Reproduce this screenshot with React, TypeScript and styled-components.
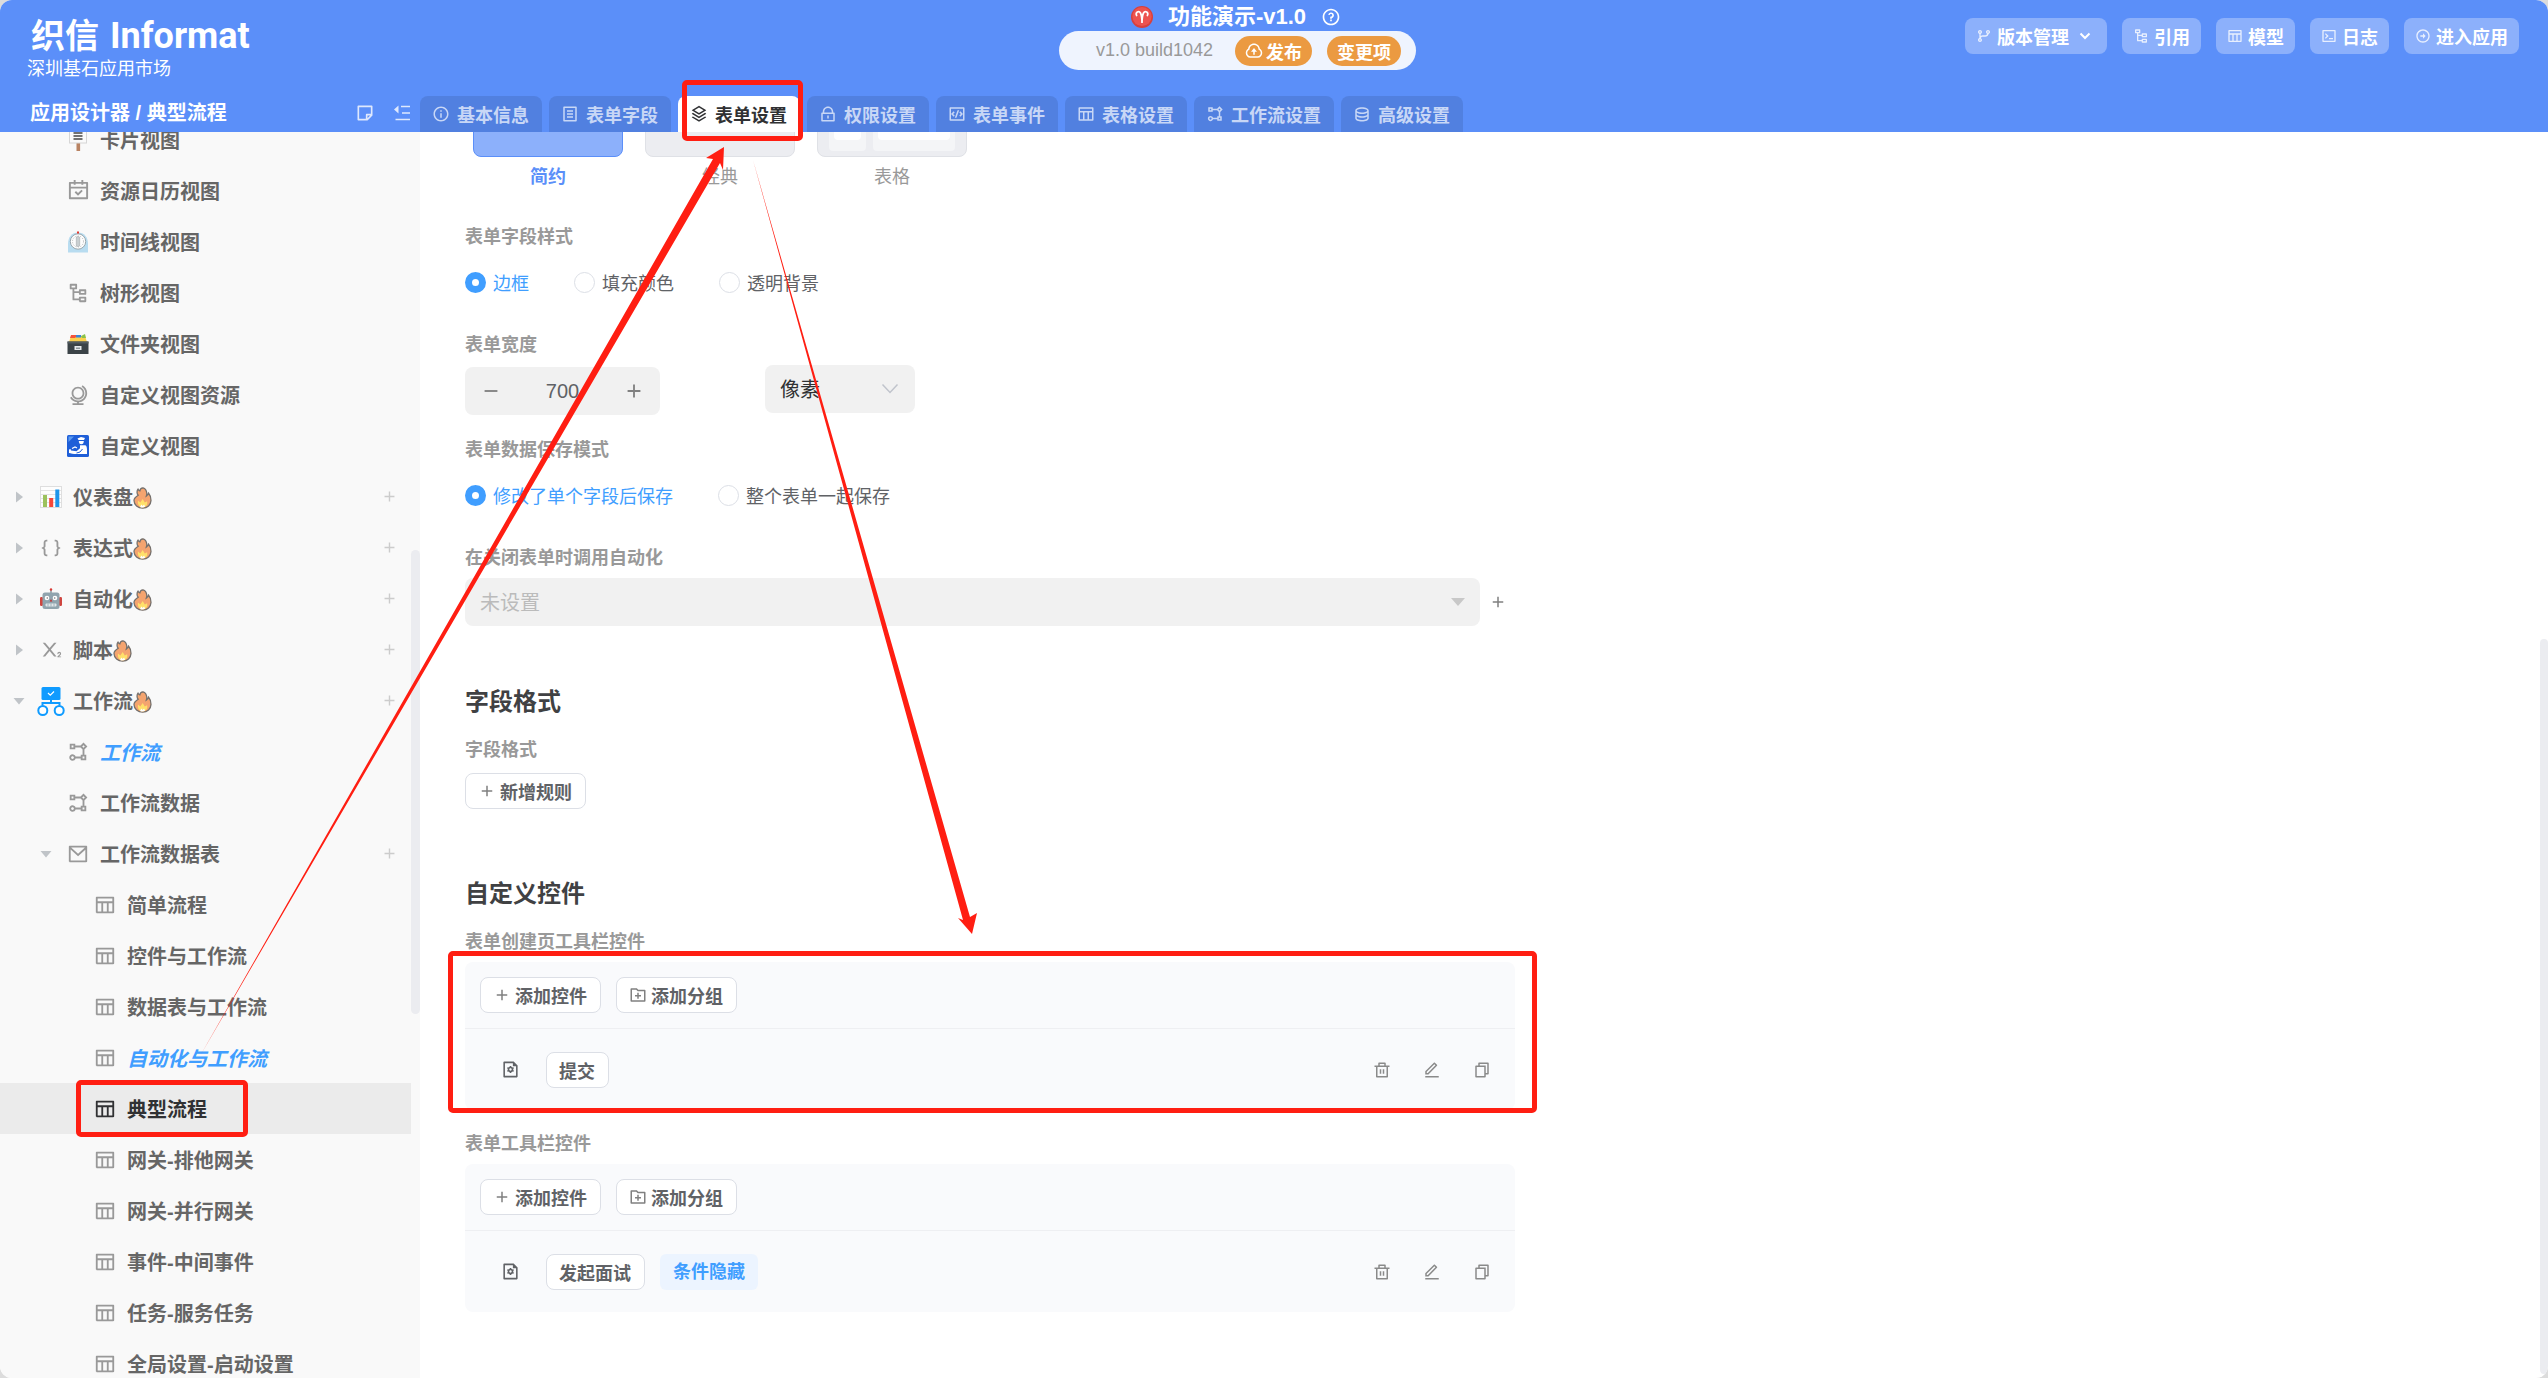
import React from 'react';
import styled, { createGlobalStyle, css } from 'styled-components';
import {
  RiAddLine,
  RiArrowRightCircleLine,
  RiBracesLine,
  RiCalendarCheckLine,
  RiCodeBoxLine,
  RiDatabase2Line,
  RiDeleteBinLine,
  RiEditLine,
  RiFileCopyLine,
  RiFileListLine,
  RiFileSettingsLine,
  RiFlowChart,
  RiFolderAddLine,
  RiGitBranchLine,
  RiGlobeLine,
  RiInformationLine,
  RiLockLine,
  RiMailLine,
  RiNodeTree,
  RiQuestionLine,
  RiStackLine,
  RiStickyNoteLine,
  RiSubscript,
  RiSubtractLine,
  RiTableLine,
  RiTerminalBoxLine,
  RiUploadCloudLine,
} from 'react-icons/ri';

const color = {
  brand: '#5b8ff9',
  brandDark: '#5180e0',
  accent: '#409eff',
  mark: '#ff1e12',
  text: '#666666',
  muted: '#999999',
  border: '#dcdfe6',
  field: '#f1f1f1',
};

const GlobalStyle = createGlobalStyle`
  * { box-sizing: border-box; }
  body {
    margin: 0;
    background: #dcdcdc;
    font-family: "Liberation Sans", "Noto Sans CJK SC", sans-serif;
    font-size: 18px;
    color: ${color.text};
  }
  button, input, select { font: inherit; color: inherit; }
  button { cursor: pointer; }
  svg { display: block; flex: none; }
`;

/* ---------- drawings ---------- */

const FireIcon = () => (
  <svg width="19" height="22" viewBox="0 0 19 22" aria-hidden="true">
    <path
      d="M5.2 8.2C3.6 6.6 3.8 3.6 5 2.2c.4 1 1 1.500 1.800 1.700C7 2.400 8.200 1 10 .8c2 .6 3.500 2.600 3.800 5.200.1 1.200-.1 2.200-.5 3.200 1.200-.5 2-1.600 2.300-3 1.600 1.800 2.500 4.200 2.400 7.400-.2 4.300-3.600 7.600-8.300 7.600-4.900 0-8.600-3.200-8.700-7.600C1 11.200 3.200 9.400 5.200 8.200z"
      fill="#f4a46f"
      stroke="#74706d"
      strokeWidth="1.3"
    />
    <path d="M5 13.500l2.300 2 2.400-3.500 2.100 3.600 2.300-1.300c.8 3.600-1 6-4.300 6-3.400 0-5.500-2.600-4.800-6.800z" fill="#ffe06a" />
    <path d="M7 20l1.400-2.500 1.200 1.400 1.500-1.500 1 2.400c-1.500 1-3.500 1-5.100.2z" fill="#fff" />
  </svg>
);

const PlacardIcon = () => (
  <svg width="22" height="24" viewBox="0 0 22 24" aria-hidden="true">
    <rect x="9.500" y="14" width="3.600" height="9" fill="#b98363" />
    <rect x="2.500" y="1" width="17" height="14" fill="#fafafa" stroke="#d6d6d6" />
    <path d="M6.500 5h9M6.500 8h9M6.500 11h9" stroke="#444" strokeWidth="1.500" />
  </svg>
);

const TimerIcon = () => (
  <svg width="22" height="22" viewBox="0 0 22 22" aria-hidden="true">
    <path d="M1 21.500V13C1 6 5 1.500 11 1.500S21 6 21 13v8.500z" fill="#b8dcf0" />
    <circle cx="11" cy="10.500" r="7.700" fill="#fdfdfd" stroke="#9aa7ad" />
    <circle cx="11" cy="10.500" r="5.500" fill="none" stroke="#b5b5b5" strokeWidth="1" strokeDasharray="1 1.500" />
    <rect x="9.300" y="5.500" width="3.400" height="10" rx="1.500" fill="#c9cfd1" stroke="#a4aaac" strokeWidth=".6" />
    <rect x="10" y="0.500" width="2" height="2" fill="#e5392f" />
  </svg>
);

const CardBoxIcon = () => (
  <svg width="22" height="22" viewBox="0 0 22 22" aria-hidden="true">
    <path d="M2 9l2-6h14l2 6z" fill="#fccf4d" />
    <path d="M3 5l1-3h5v2l-1 1z" fill="#f4553b" />
    <path d="M9 2h5v2.500H9z" fill="#3a86d6" />
    <path d="M14 3l4-2 1 4h-4z" fill="#8bc34a" />
    <path d="M.5 8.500h21V21H.5z" fill="#3b4347" />
    <path d="M.5 8.500h21v2H.5z" fill="#535d62" />
    <rect x="7.500" y="13" width="7" height="4" fill="#e6eaec" />
    <rect x="9" y="14.500" width="4" height="1.500" fill="#8c969a" />
  </svg>
);

const PassportIcon = () => (
  <svg width="22" height="22" viewBox="0 0 22 22" aria-hidden="true">
    <rect width="22" height="22" rx="1.500" fill="#1f5fd8" />
    <path d="M1.500 7V1.500H7z" fill="#5c9bf0" />
    <path d="M10.500 3.500l3.500-1.500 4 1-1 2h-5.500z" fill="#fff" />
    <path d="M11.800 6h5c0 2-.8 3.300-2.500 3.300S11.800 8 11.800 6z" fill="#fff" />
    <path d="M13 10.300h5c1.300 0 2 2 2 4.500V19H9.500c-3 0-6-.5-7.500-1v-3.500l1.500-.5.500 1.500 5.500.8 3.500-3z" fill="#fff" />
    <path d="M5 13.500l3-1.500 2 1" stroke="#fff" strokeWidth="1.200" fill="none" />
    <path d="M9.500 18l3.500-1 2.500-3" stroke="#1f5fd8" strokeWidth="1" fill="none" />
  </svg>
);

const BarsIcon = () => (
  <svg width="22" height="22" viewBox="0 0 22 22" aria-hidden="true">
    <rect x=".5" y=".5" width="21" height="21" fill="#fdfdfd" stroke="#dedede" />
    <path d="M1 4.500h20M1 8.500h20M1 12.500h20M1 16.500h20" stroke="#e3e3e3" />
    <rect x="3" y="9" width="4" height="12" fill="#9cc25c" />
    <rect x="9.200" y="12" width="4" height="9" fill="#f4473a" />
    <rect x="15.300" y="3.500" width="4" height="17.500" fill="#1e96ea" />
  </svg>
);

const RobotIcon = () => (
  <svg width="22" height="22" viewBox="0 0 22 22" aria-hidden="true">
    <path d="M11 1v4" stroke="#7a878d" strokeWidth="1.300" />
    <circle cx="11" cy="1.500" r="1.200" fill="#d93a35" />
    <rect x="0" y="9" width="3" height="9" rx="1.200" fill="#cf4640" />
    <rect x="19" y="9" width="3" height="9" rx="1.200" fill="#cf4640" />
    <rect x="2.500" y="4.500" width="17" height="16.500" rx="2.500" fill="#90a4ae" />
    <circle cx="7" cy="10" r="2.300" fill="#fff" />
    <circle cx="15" cy="10" r="2.300" fill="#fff" />
    <circle cx="7.300" cy="10" r="0.800" fill="#777" />
    <circle cx="14.700" cy="10" r="0.800" fill="#777" />
    <path d="M11 11l1.300 2.500H9.700z" fill="#c62828" />
    <rect x="5.500" y="15.500" width="11" height="3" rx="1" fill="#e2e7e9" />
    <path d="M8 15.500v3M11 15.500v3M14 15.500v3" stroke="#90a4ae" strokeWidth=".8" />
  </svg>
);

const FlowIcon = () => (
  <svg width="28" height="30" viewBox="0 0 28 30" aria-hidden="true">
    <rect x="4.500" y="1" width="19" height="13" rx="1.500" fill="#0f9bff" />
    <path d="M11 7l2.300 2.200L17 5.500" stroke="#fff" strokeWidth="1.200" fill="none" />
    <path d="M14 14v3.500M5.500 19.500v-2.500h17v2.500" stroke="#0f9bff" strokeWidth="2" fill="none" />
    <circle cx="5.800" cy="24.500" r="4.500" fill="#fff" stroke="#0f9bff" strokeWidth="2" />
    <circle cx="22.200" cy="24.500" r="4.500" fill="#fff" stroke="#0f9bff" strokeWidth="2" />
  </svg>
);

const AriesIcon = () => (
  <svg width="22" height="22" viewBox="0 0 22 22" aria-hidden="true">
    <circle cx="11" cy="11" r="11" fill="#d8403c" />
    <circle cx="11" cy="10.500" r="9.600" fill="#ec5350" />
    <path
      d="M5.600 9.500C4 6 8 4.300 9.500 7c1 2 1.500 5 1.500 10 0-5 .5-8 1.500-10 1.500-2.700 5.500-1 3.900 2.500"
      fill="none"
      stroke="#fff"
      strokeWidth="1.700"
      strokeLinecap="round"
    />
  </svg>
);

const FoldIcon = () => (
  <svg width="18" height="18" viewBox="0 0 18 18" aria-hidden="true">
    <path d="M8 2.500h9M9 9h8M2.500 15.500H17" stroke="currentColor" strokeWidth="1.700" fill="none" />
    <path d="M5.500 1.500v8L1 5.500z" fill="currentColor" />
  </svg>
);

const ChevronIcon = () => (
  <svg width="12" height="10" viewBox="0 0 12 10" aria-hidden="true">
    <path d="M1.500 2.500L6 7l4.500-4.500" stroke="currentColor" strokeWidth="2" fill="none" />
  </svg>
);

const Triangle = ({ dir }: { dir: 'right' | 'down' }) => (
  <svg width="12" height="12" viewBox="0 0 12 12" aria-hidden="true">
    <path d={dir === 'right' ? 'M3 0.500l7 5.500-7 5.500z' : 'M.5 3h11L6 9.500z'} fill="#c0c4c8" />
  </svg>
);

/* ---------- frame ---------- */

const Page = styled.div`
  position: relative;
  display: flex;
  flex-direction: column;
  height: 100vh;
  overflow: hidden;
  border-radius: 12px;
  background: #fff;
`;

const Header = styled.header`
  flex: none;
  display: flex;
  flex-direction: column;
  justify-content: space-between;
  height: 132px;
  background: ${color.brand};
  color: #fff;
`;

const HeaderTop = styled.div`
  display: flex;
  align-items: flex-start;
  padding-right: 29px;
`;

const Brand = styled.div`
  flex: 0 0 510px;
  padding: 13px 0 0 27px;
`;

const Logo = styled.div`
  display: flex;
  align-items: center;
  gap: 11px;
  height: 46px;
  padding-left: 4px;
  font-weight: 700;
`;

const LogoHan = styled.span`
  font-size: 34px;
  line-height: 46px;
`;

const LogoLatin = styled.span`
  font-family: Roboto, "Liberation Sans", sans-serif;
  font-size: 36px;
  line-height: 46px;
`;

const Tenant = styled.div`
  line-height: 20px;
`;

const Centre = styled.div`
  flex: 1;
  display: flex;
  flex-direction: column;
  align-items: center;
`;

const AppTitle = styled.h1`
  display: flex;
  align-items: center;
  gap: 15px;
  height: 31px;
  margin: 0;
  padding: 3px 3px 0 0;
  font-size: 22px;
  line-height: 28px;
`;

const VersionBar = styled.div`
  display: flex;
  align-items: center;
  gap: 15px;
  height: 39px;
  padding: 0 15px 0 37px;
  border-radius: 20px;
  background: #eff4fe;
  color: #999;
`;

const Build = styled.span`
  padding-right: 7px;
`;

const PillButton = styled.button`
  display: flex;
  align-items: center;
  gap: 3px;
  height: 30px;
  padding: 0 10px;
  border: 0;
  border-radius: 15px;
  background: #eb9a41;
  color: #fff;
  font-weight: 700;
`;

const Actions = styled.nav`
  display: flex;
  gap: 15px;
  padding-top: 18px;
`;

const ActionButton = styled.button`
  display: flex;
  align-items: center;
  gap: 5px;
  height: 36px;
  padding: 0 11px;
  border: 0;
  border-radius: 8px;
  background: #8cb0fb;
  color: #fff;
  font-weight: 700;
  white-space: nowrap;

  svg:first-child { opacity: 0.8; }
`;

const MenuMark = styled.span`
  padding: 0 5px;

  && svg { opacity: 1; }
`;

const HeaderBottom = styled.div`
  display: flex;
  align-items: flex-end;
`;

const Crumbs = styled.div`
  flex: 0 0 420px;
  display: flex;
  align-items: center;
  gap: 18px;
  height: 38px;
  padding: 0 9px 0 30px;
`;

const CrumbText = styled.strong`
  flex: 1;
  font-size: 20px;
  line-height: 24px;
`;

const BareButton = styled.button`
  display: flex;
  align-items: center;
  justify-content: center;
  padding: 0;
  border: 0;
  background: none;
  opacity: 0.8;
`;

const Tabs = styled.nav`
  display: flex;
  gap: 7px;
`;

const Tab = styled.button<{ $active?: boolean }>`
  display: flex;
  align-items: center;
  gap: 7px;
  height: 36px;
  padding: 0 13px 0 12px;
  border: 0;
  border-radius: 8px 8px 0 0;
  background: ${p => (p.$active ? '#fff' : color.brandDark)};
  color: ${p => (p.$active ? '#303133' : '#c8d7f6')};
  font-weight: 700;
  white-space: nowrap;
`;

const Body = styled.div`
  flex: 1;
  display: flex;
  min-height: 0;
`;

/* ---------- sidebar ---------- */

const Sidebar = styled.aside`
  position: relative;
  flex: 0 0 420px;
  overflow: hidden;
  padding-right: 9px;
  background: #f9f9f9;
`;

const ScrollThumb = styled.div<{ $side: 'tree' | 'page' }>`
  position: absolute;
  right: 0;
  border-radius: 5px;
  background: #ebecf0;
  ${p =>
    p.$side === 'tree'
      ? css`
          top: 418px;
          width: 9px;
          height: 464px;
        `
      : css`
          top: 507px;
          bottom: 4px;
          width: 8px;
        `}
`;

const Tree = styled.ul`
  margin: -18px 0 0;
  padding: 0;
  list-style: none;
`;

const TreeRow = styled.li<{ $level: number; $selected?: boolean }>`
  display: flex;
  align-items: center;
  height: 51px;
  padding: 0 10px 0 ${p => 7 + 27 * p.$level}px;
  background: ${p => (p.$selected ? '#ebebeb' : 'transparent')};
  color: ${p => (p.$selected ? '#303133' : color.text)};
`;

const Caret = styled.span`
  display: flex;
  justify-content: center;
  width: 24px;
`;

const TreeIcon = styled.span<{ $selected?: boolean }>`
  display: flex;
  justify-content: center;
  width: 40px;
  color: ${p => (p.$selected ? '#303133' : color.muted)};
`;

const TreeLink = styled.a<{ $linked?: boolean }>`
  flex: 1;
  display: flex;
  align-items: center;
  padding: 2px 0 0 2px;
  color: ${p => (p.$linked ? color.accent : 'inherit')};
  font-size: 20px;
  font-style: ${p => (p.$linked ? 'italic' : 'normal')};
  font-weight: 700;
  line-height: 24px;
  text-decoration: none;
`;

const RowAdd = styled.button`
  padding: 0;
  border: 0;
  background: none;
  color: #ccc;
  width: 24px;
  display: flex;
  justify-content: center;
`;

type Node = {
  level: number;
  icon: React.ReactNode;
  name: string;
  caret?: 'right' | 'down';
  fire?: boolean;
  add?: boolean;
  linked?: boolean;
  selected?: boolean;
};

const table = <RiTableLine size={22} />;

const nodes: Node[] = [
  { level: 1, icon: <PlacardIcon />, name: '卡片视图' },
  { level: 1, icon: <RiCalendarCheckLine size={23} />, name: '资源日历视图' },
  { level: 1, icon: <TimerIcon />, name: '时间线视图' },
  { level: 1, icon: <RiNodeTree size={22} />, name: '树形视图' },
  { level: 1, icon: <CardBoxIcon />, name: '文件夹视图' },
  { level: 1, icon: <RiGlobeLine size={22} />, name: '自定义视图资源' },
  { level: 1, icon: <PassportIcon />, name: '自定义视图' },
  { level: 0, icon: <BarsIcon />, name: '仪表盘', caret: 'right', fire: true, add: true },
  { level: 0, icon: <RiBracesLine size={22} />, name: '表达式', caret: 'right', fire: true, add: true },
  { level: 0, icon: <RobotIcon />, name: '自动化', caret: 'right', fire: true, add: true },
  { level: 0, icon: <RiSubscript size={22} />, name: '脚本', caret: 'right', fire: true, add: true },
  { level: 0, icon: <FlowIcon />, name: '工作流', caret: 'down', fire: true, add: true },
  { level: 1, icon: <RiFlowChart size={22} />, name: '工作流', linked: true },
  { level: 1, icon: <RiFlowChart size={22} />, name: '工作流数据' },
  { level: 1, icon: <RiMailLine size={22} />, name: '工作流数据表', caret: 'down', add: true },
  { level: 2, icon: table, name: '简单流程' },
  { level: 2, icon: table, name: '控件与工作流' },
  { level: 2, icon: table, name: '数据表与工作流' },
  { level: 2, icon: table, name: '自动化与工作流', linked: true },
  { level: 2, icon: table, name: '典型流程', selected: true },
  { level: 2, icon: table, name: '网关-排他网关' },
  { level: 2, icon: table, name: '网关-并行网关' },
  { level: 2, icon: table, name: '事件-中间事件' },
  { level: 2, icon: table, name: '任务-服务任务' },
  { level: 2, icon: table, name: '全局设置-启动设置' },
];

/* ---------- form ---------- */

const Main = styled.main`
  position: relative;
  flex: 1;
  overflow: hidden;
  padding: 0 45px;
`;

const Form = styled.form`
  max-width: 1050px;
  margin-top: -75px;
`;

const Previews = styled.div`
  display: flex;
  gap: 22px;
  padding-left: 8px;
  margin-bottom: 36px;
`;

const Preview = styled.button<{ $active?: boolean }>`
  display: flex;
  flex-direction: column;
  align-items: center;
  gap: 8px;
  padding: 0;
  border: 0;
  background: none;
  color: ${p => (p.$active ? color.brand : color.muted)};
  font-weight: ${p => (p.$active ? 700 : 400)};
  line-height: 24px;
`;

const Thumb = styled.span<{ $active?: boolean }>`
  display: flex;
  gap: 7px;
  width: 150px;
  height: 100px;
  padding: 5px 11px;
  border: 1px solid ${p => (p.$active ? color.brand : '#dfe1e6')};
  border-radius: 8px;
  background: ${p => (p.$active ? '#8cb0fb' : '#ecedf1')};
`;

const ThumbPane = styled.span<{ $grow: number }>`
  flex: ${p => p.$grow} 1 0;
  padding: 5px;
  border-radius: 4px;
  background: #f4f5f7;

  &::before {
    content: '';
    display: block;
    height: 72px;
    border-radius: 4px;
    background: #fff;
  }
`;

const Field = styled.fieldset<{ $gap: number }>`
  min-width: 0;
  margin: 0 0 ${p => p.$gap}px;
  padding: 0;
  border: 0;
`;

const labelText = css`
  display: block;
  margin: 0 0 8px;
  padding: 0;
  color: ${color.muted};
  font-size: 18px;
  font-weight: 700;
  line-height: 24px;
`;

const Legend = styled.legend`
  ${labelText}
`;

const Label = styled.label`
  ${labelText}
`;

const Caption = styled.h3`
  ${labelText}
`;

const RadioRow = styled.div`
  display: flex;
  align-items: center;
  gap: 45px;
  height: 50px;
`;

const RadioLabel = styled.label`
  display: flex;
  align-items: center;
  gap: 7px;
  color: #606266;

  &:has(input:checked) { color: ${color.accent}; }
`;

const Radio = styled.input`
  appearance: none;
  width: 21px;
  height: 21px;
  margin: 0;
  border: 1px solid ${color.border};
  border-radius: 50%;
  background: #fff;

  &:checked { border: 7px solid ${color.accent}; }
`;

const WidthRow = styled.div`
  display: flex;
  align-items: flex-start;
  gap: 105px;
  height: 50px;
`;

const Stepper = styled.div`
  align-self: flex-end;
  display: flex;
  width: 195px;
  height: 48px;
  border-radius: 8px;
  background: ${color.field};
  color: #606266;
  font-size: 20px;
`;

const StepButton = styled.button`
  display: flex;
  align-items: center;
  justify-content: center;
  width: 52px;
  padding: 0;
  border: 0;
  background: none;
  color: #808080;
`;

const StepInput = styled.input`
  flex: 1;
  min-width: 0;
  padding: 0;
  border: 0;
  background: none;
  text-align: center;
`;

const SelectBox = styled.div<{ $width?: number }>`
  position: relative;
  ${p => (p.$width ? `width: ${p.$width}px;` : 'flex: 1;')}
  color: #c4c4c4;
`;

const Select = styled.select<{ $empty?: boolean }>`
  appearance: none;
  display: block;
  width: 100%;
  height: 48px;
  padding: 2px 15px 0;
  border: 0;
  border-radius: 8px;
  background: ${color.field};
  color: ${p => (p.$empty ? '#bbbbbb' : '#303133')};
  font-size: 20px;
`;

const SelectMark = styled.span`
  position: absolute;
  top: 0;
  right: 15px;
  display: flex;
  align-items: center;
  height: 48px;
  pointer-events: none;
`;

const AutomationRow = styled.div`
  display: flex;
  align-items: center;
`;

const AddButton = styled.button`
  display: flex;
  align-items: center;
  justify-content: center;
  width: 35px;
  height: 35px;
  padding: 0;
  border: 0;
  background: none;
  color: #808080;
`;

const Heading = styled.h2`
  margin: 60px 0 20px;
  color: #404143;
  font-size: 24px;
  line-height: 32px;
`;

const RuleRow = styled.div`
  display: flex;
  padding: 3px 0 9px;
`;

const OutlineButton = styled.button`
  display: flex;
  align-items: center;
  gap: 4px;
  height: 36px;
  padding: 0 13px 0 12px;
  border: 1px solid ${color.border};
  border-radius: 8px;
  background: #fff;
  color: #606266;
  font-weight: 700;
  white-space: nowrap;

  svg { color: #808080; }
`;

const Panel = styled.div`
  margin-bottom: 22px;
  border-radius: 8px;
  background: #f9fafc;
`;

const PanelHead = styled.div`
  display: flex;
  gap: 15px;
  padding: 15px;
  border-bottom: 1px solid #eeeff2;
`;

const PanelRow = styled.div`
  display: flex;
  align-items: center;
  gap: 15px;
  height: 81px;
  padding: 0 22px 0 36px;
  color: #606266;
`;

const Grip = styled.span`
  width: 30px;
`;

const Tag = styled.span`
  height: 36px;
  padding: 0 13px;
  border-radius: 6px;
  background: #ecf4ff;
  color: ${color.accent};
  font-weight: 700;
  line-height: 36px;
`;

const RowTools = styled.div`
  display: flex;
  gap: 28px;
  margin-left: auto;
`;

const ToolButton = styled.button`
  display: flex;
  padding: 2px;
  border: 0;
  background: none;
  color: #8a8a8a;
`;

/* ---------- red marks over the page ---------- */

const Mark = styled.div<{ $x: number; $y: number; $w: number; $h: number }>`
  position: absolute;
  left: ${p => p.$x}px;
  top: ${p => p.$y}px;
  width: ${p => p.$w}px;
  height: ${p => p.$h}px;
  border: 5px solid ${color.mark};
  border-radius: 5px;
  pointer-events: none;
`;

const Arrows = styled.svg`
  position: absolute;
  left: 0;
  top: 0;
  pointer-events: none;
`;

const ControlPanel = ({ title, control, tag }: { title: string; control: string; tag?: string }) => (
  <section>
    <Caption>{title}</Caption>
    <Panel>
      <PanelHead>
        <OutlineButton type="button"><RiAddLine size={18} />添加控件</OutlineButton>
        <OutlineButton type="button"><RiFolderAddLine size={18} />添加分组</OutlineButton>
      </PanelHead>
      <PanelRow>
        <Grip><RiFileSettingsLine size={19} /></Grip>
        <OutlineButton type="button">{control}</OutlineButton>
        {tag && <Tag>{tag}</Tag>}
        <RowTools>
          <ToolButton type="button" aria-label="删除"><RiDeleteBinLine size={18} /></ToolButton>
          <ToolButton type="button" aria-label="编辑"><RiEditLine size={18} /></ToolButton>
          <ToolButton type="button" aria-label="复制"><RiFileCopyLine size={18} /></ToolButton>
        </RowTools>
      </PanelRow>
    </Panel>
  </section>
);

const Choice = ({ name, text, checked }: { name: string; text: string; checked?: boolean }) => (
  <RadioLabel>
    <Radio type="radio" name={name} defaultChecked={checked} />
    {text}
  </RadioLabel>
);

export default function App() {
  return (
    <>
      <GlobalStyle />
      <Page>
        <Header>
          <HeaderTop>
            <Brand>
              <Logo>
                <LogoHan>织信</LogoHan>
                <LogoLatin>Informat</LogoLatin>
              </Logo>
              <Tenant>深圳基石应用市场</Tenant>
            </Brand>
            <Centre>
              <AppTitle>
                <AriesIcon />
                功能演示-v1.0
                <RiQuestionLine size={20} />
              </AppTitle>
              <VersionBar>
                <Build>v1.0 build1042</Build>
                <PillButton type="button"><RiUploadCloudLine size={18} />发布</PillButton>
                <PillButton type="button">变更项</PillButton>
              </VersionBar>
            </Centre>
            <Actions>
              <ActionButton type="button">
                <RiGitBranchLine size={16} />版本管理<MenuMark><ChevronIcon /></MenuMark>
              </ActionButton>
              <ActionButton type="button"><RiNodeTree size={16} />引用</ActionButton>
              <ActionButton type="button"><RiTableLine size={16} />模型</ActionButton>
              <ActionButton type="button"><RiTerminalBoxLine size={16} />日志</ActionButton>
              <ActionButton type="button"><RiArrowRightCircleLine size={16} />进入应用</ActionButton>
            </Actions>
          </HeaderTop>
          <HeaderBottom>
            <Crumbs>
              <CrumbText>应用设计器 / 典型流程</CrumbText>
              <BareButton type="button" aria-label="便签"><RiStickyNoteLine size={20} /></BareButton>
              <BareButton type="button" aria-label="收起"><FoldIcon /></BareButton>
            </Crumbs>
            <Tabs>
              <Tab type="button"><RiInformationLine size={18} />基本信息</Tab>
              <Tab type="button"><RiFileListLine size={18} />表单字段</Tab>
              <Tab type="button" $active><RiStackLine size={18} />表单设置</Tab>
              <Tab type="button"><RiLockLine size={18} />权限设置</Tab>
              <Tab type="button"><RiCodeBoxLine size={18} />表单事件</Tab>
              <Tab type="button"><RiTableLine size={18} />表格设置</Tab>
              <Tab type="button"><RiFlowChart size={18} />工作流设置</Tab>
              <Tab type="button"><RiDatabase2Line size={18} />高级设置</Tab>
            </Tabs>
          </HeaderBottom>
        </Header>

        <Body>
          <Sidebar>
            <Tree>
              {nodes.map((n, i) => (
                <TreeRow key={i} $level={n.level} $selected={n.selected}>
                  <Caret>{n.caret && <Triangle dir={n.caret} />}</Caret>
                  <TreeIcon $selected={n.selected}>{n.icon}</TreeIcon>
                  <TreeLink href="#" $linked={n.linked}>
                    {n.name}
                    {n.fire && <FireIcon />}
                  </TreeLink>
                  {n.add && <RowAdd type="button" aria-label="新增"><RiAddLine size={17} /></RowAdd>}
                </TreeRow>
              ))}
            </Tree>
            <ScrollThumb $side="tree" />
          </Sidebar>

          <Main>
            <Form>
              <Previews>
                <Preview type="button" $active><Thumb $active />简约</Preview>
                <Preview type="button"><Thumb />经典</Preview>
                <Preview type="button">
                  <Thumb><ThumbPane $grow={3} /><ThumbPane $grow={8} /></Thumb>
                  表格
                </Preview>
              </Previews>

              <Field $gap={26}>
                <Legend>表单字段样式</Legend>
                <RadioRow>
                  <Choice name="style" text="边框" checked />
                  <Choice name="style" text="填充颜色" />
                  <Choice name="style" text="透明背景" />
                </RadioRow>
              </Field>

              <Field as="div" $gap={23}>
                <Label htmlFor="form-width">表单宽度</Label>
                <WidthRow>
                  <Stepper>
                    <StepButton type="button" aria-label="减少"><RiSubtractLine size={22} /></StepButton>
                    <StepInput id="form-width" defaultValue="700" />
                    <StepButton type="button" aria-label="增加"><RiAddLine size={22} /></StepButton>
                  </Stepper>
                  <SelectBox $width={150}>
                    <Select aria-label="单位"><option>像素</option></Select>
                    <SelectMark>
                      <svg width="20" height="12" viewBox="0 0 20 12" aria-hidden="true">
                        <path d="M2.500 1.500l7.500 8 7.500-8" fill="none" stroke="#c0c4cc" strokeWidth="1.500" />
                      </svg>
                    </SelectMark>
                  </SelectBox>
                </WidthRow>
              </Field>

              <Field $gap={26}>
                <Legend>表单数据保存模式</Legend>
                <RadioRow>
                  <Choice name="save" text="修改了单个字段后保存" checked />
                  <Choice name="save" text="整个表单一起保存" />
                </RadioRow>
              </Field>

              <Label htmlFor="automation">在关闭表单时调用自动化</Label>
              <AutomationRow>
                <SelectBox>
                  <Select id="automation" $empty><option>未设置</option></Select>
                  <SelectMark>
                    <svg width="14" height="8" viewBox="0 0 14 8" aria-hidden="true">
                      <path d="M0 0h14L7 8z" fill="#c8c8c8" />
                    </svg>
                  </SelectMark>
                </SelectBox>
                <AddButton type="button" aria-label="新增自动化"><RiAddLine size={18} /></AddButton>
              </AutomationRow>

              <Heading>字段格式</Heading>
              <Caption>字段格式</Caption>
              <RuleRow>
                <OutlineButton type="button"><RiAddLine size={18} />新增规则</OutlineButton>
              </RuleRow>

              <Heading>自定义控件</Heading>
              <ControlPanel title="表单创建页工具栏控件" control="提交" />
              <ControlPanel title="表单工具栏控件" control="发起面试" tag="条件隐藏" />
            </Form>
            <ScrollThumb $side="page" />
          </Main>
        </Body>

        <Mark $x={682} $y={80} $w={121} $h={61} />
        <Mark $x={76} $y={1080} $w={172} $h={57} />
        <Mark $x={448} $y={951} $w={1089} $h={162} />
        <Arrows width="1540" height="1100" viewBox="0 0 1540 1100" aria-hidden="true">
          <path d="M200 1056L713 159 706 158 724 147 723 170 720 163z" fill={color.mark} />
          <path d="M753 160L963 920 958 918 972 934 977 913 970 917z" fill={color.mark} />
        </Arrows>
      </Page>
    </>
  );
}
